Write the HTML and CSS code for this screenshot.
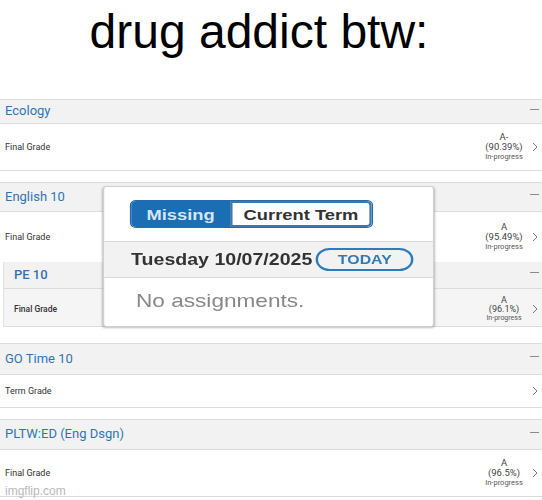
FILE: index.html
```html
<!DOCTYPE html>
<html>
<head>
<meta charset="utf-8">
<link rel="stylesheet" href="styles.css">
</head>
<body>
<div class="page">
  <h1 class="meme-title">drug addict btw:</h1>
  <div class="courses">
    <section class="course c-ecology">
      <div class="course-head"><span class="course-name">Ecology</span><span class="collapse"></span></div>
      <div class="grade-row">
        <span class="grade-label">Final Grade</span>
        <div class="grade"><span>A-</span><span>(90.39%)</span><span class="status">In-progress</span></div>
        <svg class="chev" width="6" height="10" viewBox="0 0 6 10"><path d="M1 1 L5 5 L1 9" fill="none" stroke="#777" stroke-width="1"/></svg>
      </div>
    </section>
    <section class="course c-english">
      <div class="course-head"><span class="course-name">English 10</span><span class="collapse"></span></div>
      <div class="grade-row">
        <span class="grade-label">Final Grade</span>
        <div class="grade"><span>A</span><span>(95.49%)</span><span class="status">In-progress</span></div>
        <svg class="chev" width="6" height="10" viewBox="0 0 6 10"><path d="M1 1 L5 5 L1 9" fill="none" stroke="#777" stroke-width="1"/></svg>
      </div>
    </section>
    <section class="course c-pe">
      <div class="course-head"><span class="course-name">PE 10</span><span class="collapse"></span></div>
      <div class="grade-row">
        <span class="grade-label">Final Grade</span>
        <div class="grade"><span>A</span><span>(96.1%)</span><span class="status">In-progress</span></div>
        <svg class="chev" width="6" height="10" viewBox="0 0 6 10"><path d="M1 1 L5 5 L1 9" fill="none" stroke="#777" stroke-width="1"/></svg>
      </div>
    </section>
    <section class="course c-go">
      <div class="course-head"><span class="course-name">GO Time 10</span><span class="collapse"></span></div>
      <div class="grade-row">
        <span class="grade-label">Term Grade</span>
        <svg class="chev" width="6" height="10" viewBox="0 0 6 10"><path d="M1 1 L5 5 L1 9" fill="none" stroke="#777" stroke-width="1"/></svg>
      </div>
    </section>
    <section class="course c-pltw">
      <div class="course-head"><span class="course-name">PLTW:ED (Eng Dsgn)</span><span class="collapse"></span></div>
      <div class="grade-row">
        <span class="grade-label">Final Grade</span>
        <div class="grade"><span>A</span><span>(96.5%)</span><span class="status">In-progress</span></div>
        <svg class="chev" width="6" height="10" viewBox="0 0 6 10"><path d="M1 1 L5 5 L1 9" fill="none" stroke="#777" stroke-width="1"/></svg>
      </div>
    </section>
  </div>

  <div class="popup">
    <div class="tabs">
      <div class="seg">
        <span class="seg-btn seg-active">Missing</span>
        <span class="seg-btn seg-plain">Current Term</span>
      </div>
    </div>
    <div class="date-row">
      <span class="date">Tuesday 10/07/2025</span>
      <span class="today">TODAY</span>
    </div>
    <div class="empty">No assignments.</div>
  </div>

  <div class="watermark">imgflip.com</div>
</div>
</body>
</html>
```

FILE: styles.css
```css
* { box-sizing: border-box; }
html, body { margin: 0; padding: 0; background: #fff; }
.page {
  position: relative;
  width: 542px;
  height: 500px;
  overflow: hidden;
  font-family: Roboto, "Liberation Sans", Arial, sans-serif;
}
.meme-title {
  margin: 0;
  height: 99px;
  padding: 4px 24px 0 0;
  font-family: "Liberation Sans", Arial, sans-serif;
  font-weight: normal;
  font-size: 48px;
  line-height: 56px;
  text-align: center;
  color: #000;
}
.courses { display: flex; flex-direction: column; }
.course-head {
  display: flex;
  align-items: center;
  justify-content: space-between;
  background: #f2f2f2;
  border-top: 1px solid #dcdcdc;
  border-bottom: 1px solid #dcdcdc;
  padding: 0 3px 2px 5px;
}
.course-name {
  color: #3174b6;
  font-size: 13px;
}
.collapse {
  width: 9px;
  height: 1px;
  background: #8a8a8a;
  margin-bottom: 3px;
}
.grade-row {
  display: flex;
  align-items: center;
  background: #fff;
  border-bottom: 1px solid #dcdcdc;
  padding: 0 4px 0 5px;
}
.grade-label {
  flex: 1;
  font-size: 9px;
  color: #333;
}
.grade {
  display: flex;
  flex-direction: column;
  align-items: center;
  width: 44px;
  margin-right: 6px;
  font-size: 9.5px;
  line-height: 10px;
  color: #444;
}
.grade .status { font-size: 7.5px; color: #555; }
.chev { display: block; }

.c-ecology .course-head { height: 25px; }
.c-ecology .grade-row { height: 47px; }
.c-ecology { margin-bottom: 11px; }
.c-english .course-head { height: 30px; }
.c-english .grade-row { height: 50px; border-bottom: none; }
.c-pe { margin-left: 3px; border-left: 1px solid #e2e2e2; margin-bottom: 16px; }
.c-pe .course-head { height: 27px; border-top: none; padding-left: 10px; }
.c-pe .course-name { font-size: 13px; font-weight: 500; }
.c-pe .grade-row { height: 38px; background: #f5f5f5; padding-left: 10px; padding-top: 3px; }
.c-pe .grade-label { font-size: 8.5px; font-weight: 500; }
.c-pe .grade { font-size: 9px; line-height: 9px; }
.c-pe .grade .status { font-size: 7px; }
.c-go .course-head { height: 32px; }
.c-go .grade-row { height: 33px; }
.c-go { margin-bottom: 11px; }
.c-pltw .course-head { height: 31px; }
.c-pltw .grade-row { height: 47px; }

.popup {
  position: absolute;
  left: 103px;
  top: 186px;
  width: 271px;
  height: 141px;
  transform: scaleX(1.222);
  transform-origin: left top;
  background: #fff;
  border: 1px solid #d0d0d0;
  border-radius: 3px;
  box-shadow: 0 1px 2px rgba(0,0,0,0.25);
  font-family: "Liberation Sans", Arial, sans-serif;
}
.tabs {
  height: 55px;
  padding: 13px 0 0 21px;
  border-bottom: 1px solid #d8d8d8;
}
.seg {
  display: inline-flex;
  height: 28px;
  border: 1px solid #2a6aa8;
  border-radius: 5px;
  overflow: hidden;
}
.seg-btn {
  display: flex;
  align-items: center;
  justify-content: center;
  font-weight: bold;
  font-size: 15px;
}
.seg-active {
  width: 81px;
  background: #1b6db4;
  color: #d4e6f6;
}
.seg-plain {
  width: 116px;
  background: #fff;
  color: #333;
  border: 2px solid #3b78ae;
  border-radius: 0 4px 4px 0;
}
.date-row {
  display: flex;
  align-items: center;
  gap: 3px;
  height: 36px;
  padding-left: 22px;
  background: #f2f2f2;
  border-bottom: 1px solid #d8d8d8;
}
.date {
  font-weight: bold;
  font-size: 16px;
  color: #333;
}
.today {
  display: flex;
  align-items: center;
  justify-content: center;
  width: 80px;
  height: 23px;
  border: 2px solid #2f7bba;
  border-radius: 12px;
  color: #2f7bba;
  font-weight: bold;
  font-size: 13px;
}
.empty {
  padding: 12px 0 0 26px;
  font-size: 18.5px;
  color: #888;
}
.watermark {
  position: absolute;
  left: 5px;
  top: 484px;
  font-family: "Liberation Sans", Arial, sans-serif;
  font-size: 12px;
  color: #b8b8b8;
}
```
